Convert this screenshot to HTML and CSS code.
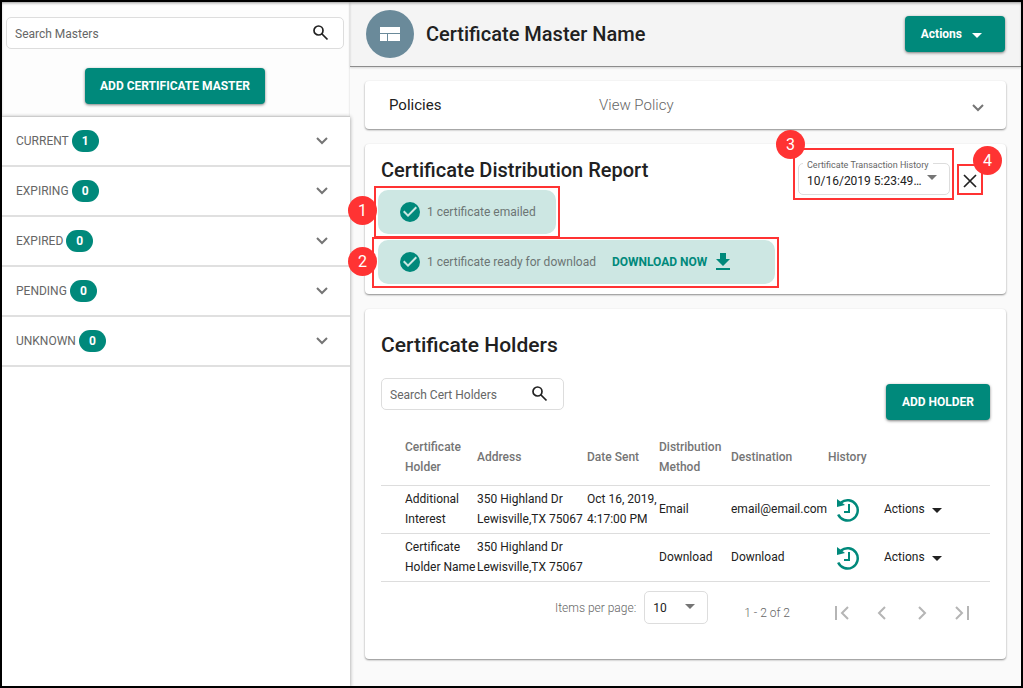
FILE: index.html
```
<!DOCTYPE html>
<html lang="en">
<head>
    <meta charset="UTF-8">
    <meta name="viewport" content="width=device-width, initial-scale=1.0">
    <title>Certificate Master Name</title>
    <link rel="stylesheet" href="styles.css">
</head>
<body>

<aside class="sidebar">
    <div class="sidebar-top">
        <form class="search">
            <input type="text" placeholder="Search Masters" aria-label="Search Masters">
            <button type="button" aria-label="Search">
                <svg width="20" height="20" viewBox="0 0 20 20"><circle cx="7.500" cy="7.500" r="4.500"/><path d="M10.500 10.500l6 6"/></svg>
            </button>
        </form>
        <button type="button" class="btn">ADD CERTIFICATE MASTER</button>
    </div>
    <nav class="groups">
        <button type="button" class="group">
            <span>CURRENT</span><span class="count">1</span>
            <svg class="chevron" width="12" height="8" viewBox="0 0 12 8"><path d="M1 1l5 5 5-5"/></svg>
        </button>
        <button type="button" class="group">
            <span>EXPIRING</span><span class="count">0</span>
            <svg class="chevron" width="12" height="8" viewBox="0 0 12 8"><path d="M1 1l5 5 5-5"/></svg>
        </button>
        <button type="button" class="group">
            <span>EXPIRED</span><span class="count">0</span>
            <svg class="chevron" width="12" height="8" viewBox="0 0 12 8"><path d="M1 1l5 5 5-5"/></svg>
        </button>
        <button type="button" class="group">
            <span>PENDING</span><span class="count">0</span>
            <svg class="chevron" width="12" height="8" viewBox="0 0 12 8"><path d="M1 1l5 5 5-5"/></svg>
        </button>
        <button type="button" class="group">
            <span>UNKNOWN</span><span class="count">0</span>
            <svg class="chevron" width="12" height="8" viewBox="0 0 12 8"><path d="M1 1l5 5 5-5"/></svg>
        </button>
    </nav>
</aside>

<main class="main">
    <header class="page-header">
        <span class="avatar">
            <svg width="20" height="14" viewBox="0 0 20 14"><path d="M0 0h20v6H0zM0 7h7v7H0zM8 7h12v7H8z"/></svg>
        </span>
        <h1>Certificate Master Name</h1>
        <button type="button" class="btn btn-menu">Actions <span class="caret"></span></button>
    </header>

    <div class="content">
        <section class="card policies">
            <span class="policies-title">Policies</span>
            <a href="#">View Policy</a>
            <button type="button" class="plain" aria-label="Expand policies">
                <svg class="chevron" width="12" height="8" viewBox="0 0 12 8"><path d="M1 1l5 5 5-5"/></svg>
            </button>
        </section>

        <section class="card report">
            <div class="report-main">
                <h2>Certificate Distribution Report</h2>
                <div class="status">
                    <svg width="24" height="24" viewBox="0 0 24 24"><path d="M12 2a10 10 0 1 0 0 20 10 10 0 0 0 0-20zm-2 15l-5-5 1.410-1.410L10 14.170l7.590-7.590L19 8l-9 9z"/></svg>
                    <span>1 certificate emailed</span>
                    <span class="mark mark-left"><b>1</b></span>
                </div>
                <div class="status status-wide">
                    <svg width="24" height="24" viewBox="0 0 24 24"><path d="M12 2a10 10 0 1 0 0 20 10 10 0 0 0 0-20zm-2 15l-5-5 1.410-1.410L10 14.170l7.590-7.590L19 8l-9 9z"/></svg>
                    <span>1 certificate ready for download</span>
                    <a href="#" class="download">DOWNLOAD NOW
                        <svg width="24" height="24" viewBox="0 0 24 24"><path d="M19 9h-4V3H9v6H5l7 7 7-7zM5 18v2h14v-2H5z"/></svg>
                    </a>
                    <span class="mark mark-left mark-wide"><b>2</b></span>
                </div>
            </div>
            <div class="history-field">
                <label for="history">Certificate Transaction History</label>
                <select id="history"><option>10/16/2019 5:23:49 PM</option></select>
                <span class="arrow"></span>
                <span class="mark mark-history"><b>3</b></span>
            </div>
            <button type="button" class="close" aria-label="Close">
                <svg width="14" height="14" viewBox="0 0 14 14"><path d="M1 1l12 12M13 1L1 13"/></svg>
                <span class="mark mark-right"><b>4</b></span>
            </button>
        </section>

        <section class="card holders">
            <h2>Certificate Holders</h2>
            <div class="toolbar">
                <form class="search search-small">
                    <input type="text" placeholder="Search Cert Holders" aria-label="Search Cert Holders">
                    <button type="button" aria-label="Search">
                        <svg width="20" height="20" viewBox="0 0 20 20"><circle cx="7.500" cy="7.500" r="4.500"/><path d="M10.500 10.500l6 6"/></svg>
                    </button>
                </form>
                <button type="button" class="btn">ADD HOLDER</button>
            </div>

            <table>
                <thead>
                    <tr>
                        <th class="col-holder">Certificate Holder</th>
                        <th class="col-address">Address</th>
                        <th class="col-date">Date Sent</th>
                        <th class="col-method">Distribution Method</th>
                        <th class="col-dest">Destination</th>
                        <th class="col-history">History</th>
                        <th></th>
                    </tr>
                </thead>
                <tbody>
                    <tr>
                        <td>Additional<br>Interest</td>
                        <td>350 Highland Dr<br>Lewisville,TX 75067</td>
                        <td>Oct 16, 2019,<br>4:17:00 PM</td>
                        <td>Email</td>
                        <td>email@email.com</td>
                        <td class="history">
                            <button type="button" class="plain" aria-label="History">
                                <svg width="24" height="24" viewBox="0 0 24 24"><path class="ring" d="M2.200 16.500A10.200 10.200 0 1 0 5 4.500"/><path class="hands" d="M13 6v8H8"/><path d="M1 1v8l8-2z"/></svg>
                            </button>
                        </td>
                        <td><button type="button" class="row-menu">Actions <span class="caret"></span></button></td>
                    </tr>
                    <tr>
                        <td>Certificate<br>Holder Name</td>
                        <td>350 Highland Dr<br>Lewisville,TX 75067</td>
                        <td></td>
                        <td>Download</td>
                        <td>Download</td>
                        <td class="history">
                            <button type="button" class="plain" aria-label="History">
                                <svg width="24" height="24" viewBox="0 0 24 24"><path class="ring" d="M2.200 16.500A10.200 10.200 0 1 0 5 4.500"/><path class="hands" d="M13 6v8H8"/><path d="M1 1v8l8-2z"/></svg>
                            </button>
                        </td>
                        <td><button type="button" class="row-menu">Actions <span class="caret"></span></button></td>
                    </tr>
                </tbody>
            </table>

            <div class="paginator">
                <div class="page-size">
                    <label for="page-size">Items per page:</label>
                    <div class="size-field">
                        <select id="page-size"><option>10</option></select>
                        <span class="arrow"></span>
                    </div>
                </div>
                <span class="range">1 - 2 of 2</span>
                <div class="pages">
                    <button type="button" aria-label="First page"><svg width="16" height="14" viewBox="0 0 16 14"><path d="M2 0v14M14 1L8 7l6 6"/></svg></button>
                    <button type="button" aria-label="Previous page"><svg width="16" height="14" viewBox="0 0 16 14"><path d="M11 1L5 7l6 6"/></svg></button>
                    <button type="button" aria-label="Next page"><svg width="16" height="14" viewBox="0 0 16 14"><path d="M5 1l6 6-6 6"/></svg></button>
                    <button type="button" aria-label="Last page"><svg width="16" height="14" viewBox="0 0 16 14"><path d="M2 1l6 6-6 6M14 0v14"/></svg></button>
                </div>
            </div>
        </section>
    </div>
</main>

</body>
</html>
```
FILE: styles.css
```
* { box-sizing: border-box; }
body { display: flex; min-height: 100vh; margin: 0; border: 2px solid #000; background: #fafafa; color: #212121; font-family: Roboto, sans-serif; font-size: 12px; line-height: 20px; }
button, input, select { font: inherit; color: inherit; }
button { padding: 0; border: none; background: none; cursor: pointer; }
svg { display: block; flex: none; }
h1, h2 { margin: 0; font-size: 20px; line-height: 24px; font-weight: 500; }
a { text-decoration: none; }

.btn { height: 36px; padding: 0 16px; border-radius: 4px; background: #00897b; color: white; font-weight: 700; box-shadow: 0 1px 3px rgba(0,0,0,0.5); }
.caret { border: 5px solid transparent; border-top-color: currentColor; border-bottom: none; }
.arrow { position: absolute; pointer-events: none; border: 5px solid transparent; border-top-color: #757575; border-bottom: none; }
.chevron { fill: none; stroke: #757575; stroke-width: 2; }

/* sidebar */
.sidebar { flex: 0 0 348px; display: flex; flex-direction: column; background: #fdfdfd; box-shadow: inset 0 2px 3px -1px rgba(0,0,0,0.4); }
.sidebar-top { display: flex; flex-direction: column; align-items: center; gap: 19px; padding: 15px 6px 12px 4px; }
.sidebar .btn { padding: 0 15px; }
.search { display: flex; align-items: center; width: 100%; height: 32px; margin: 0; padding: 0 12px 0 8px; border: 1px solid #ddd; border-radius: 5px; background: white; }
.search input { flex: 1; min-width: 0; padding: 1px 0 0; border: none; outline: none; background: none; }
.search input::placeholder { color: #666; opacity: 1; }
.search svg { fill: none; stroke: #212121; stroke-width: 1.7; }
.groups { flex: 1; border-top: 1px solid #ccc; background: white; box-shadow: 0 1px 4px rgba(0,0,0,0.4); clip-path: inset(-3px -4px 0 0); }
.group { display: flex; align-items: center; gap: 3px; width: 100%; height: 50px; padding: 0 22px 0 14px; border-bottom: 2px solid #e0e0e0; color: #666; }
.group .chevron { margin-left: auto; }
.count { width: 27px; height: 22px; border-radius: 11px; background: #00897b; color: white; font-weight: 700; line-height: 22px; }

/* main column */
.main { flex: 1; min-width: 0; }
.page-header { display: flex; align-items: center; gap: 12px; height: 65px; padding: 0 16px; border-bottom: 1px solid #8c8c8c; background: #f4f4f4; box-shadow: inset 0 2px 3px -1px rgba(0,0,0,0.4), 0 1px 2px rgba(0,0,0,0.15); }
.avatar { display: flex; align-items: center; justify-content: center; width: 48px; height: 48px; border-radius: 50%; background: #6a8a9a; fill: white; }
.btn-menu { display: flex; align-items: center; gap: 10px; margin-left: auto; padding-right: 23px; }
.btn-menu .caret { margin-top: 2px; }
.content { display: flex; flex-direction: column; gap: 15px; padding: 14px 15px 24px; }
.card { padding: 0 16px; border-radius: 4px; background: white; box-shadow: 0 1px 2px rgba(0,0,0,0.45); }

.policies { display: flex; align-items: center; height: 48px; padding: 0 22px 0 24px; font-size: 15px; }
.policies-title { flex: 0 0 210px; }
.policies a { color: #666; font-weight: 300; }
.policies button { margin-left: auto; padding-top: 6px; }

.report { display: flex; align-items: flex-start; padding: 14px 16px 10px; }
.report-main { flex: 1; display: flex; flex-direction: column; align-items: flex-start; gap: 6px; }
.report-main h2 { margin-bottom: 2px; }
.status { position: relative; display: flex; align-items: center; gap: 5px; height: 44px; margin-left: -3px; padding: 0 20px; border-radius: 10px; background: #cde7e3; color: #6c7574; }
.status svg { fill: #00897b; }
.status-wide { padding-right: 40px; }
.download { display: flex; align-items: center; gap: 4px; margin-left: 11px; color: #00897b; font-weight: 700; }

.history-field { position: relative; flex: 0 0 152px; margin-top: 5px; }
.history-field label { position: absolute; top: -6px; left: 5px; padding: 0 4px; background: white; color: #666; font-size: 9px; line-height: 16px; white-space: nowrap; }
.history-field select { width: 100%; height: 32px; padding: 3px 27px 0 8px; border: 1px solid #ddd; border-radius: 5px; background: white; appearance: none; text-overflow: ellipsis; }
.history-field .arrow { top: 12px; right: 13px; }
.close { position: relative; width: 14px; height: 14px; margin: 16px 13px 0; }
.close svg { fill: none; stroke: #212121; stroke-width: 1.7; }

/* numbered callouts */
.mark { position: absolute; inset: -4px; border: 2px solid #f33; pointer-events: none; }
.mark b { position: absolute; width: 29px; height: 29px; border-radius: 50%; background: #f33; color: white; font-size: 16px; font-weight: 400; line-height: 29px; text-align: center; }
.mark-left b { top: 8px; left: -28px; }
.mark-wide { inset: -3px -4px -4px -6px; }
.mark-wide b { left: -26px; }
.mark-history { inset: -15px -4px -5px -5px; }
.mark-history b { top: -20px; left: -19px; }
.mark-right { inset: -10px -6px -7px; }
.mark-right b { top: -20px; right: -21px; }

.holders { padding: 24px 16px 16px; }
.holders h2 { font-size: 21px; }
.toolbar { display: flex; align-items: flex-start; justify-content: space-between; margin-top: 21px; }
.search-small { width: 183px; padding-right: 13px; }
.toolbar .btn { margin-top: 6px; }

table { width: 100%; margin-top: 9px; border-collapse: collapse; table-layout: fixed; }
th, td { height: 48px; padding: 0; border-bottom: 1px solid #ddd; text-align: left; white-space: nowrap; }
th { height: 56px; color: #757575; font-weight: 500; white-space: normal; }
th:first-child, td:first-child { padding-left: 24px; }
.col-holder { width: 96px; }
.col-address { width: 110px; }
.col-date, .col-method { width: 72px; }
.col-dest { width: 97px; }
.col-history { width: 56px; }
.history .plain { display: block; margin-left: 8px; padding-top: 1px; fill: #00897b; }
.ring, .hands { fill: none; stroke: #00897b; stroke-width: 2.5; }
.hands { stroke-width: 2; }
.row-menu { display: flex; align-items: center; gap: 7px; }
.row-menu .caret { margin-top: 2px; }

.paginator { display: flex; align-items: center; justify-content: flex-end; height: 61px; padding: 2px 8px 0 0; color: #666; font-weight: 300; }
.page-size { display: flex; align-items: center; gap: 8px; margin-bottom: 12px; }
.page-size label { padding-top: 2px; }
.size-field { position: relative; }
.size-field select { width: 64px; height: 33px; padding: 2px 8px 0; border: 1px solid #ddd; border-radius: 5px; background: white; color: #212121; font-weight: 400; appearance: none; }
.size-field .arrow { top: 13px; right: 13px; }
.range { margin: 0 32px 0 36px; }
.pages { display: flex; }
.pages button { display: flex; align-items: center; justify-content: center; width: 40px; height: 40px; }
.pages svg { fill: none; stroke: #b5b5b5; stroke-width: 2; }
```
